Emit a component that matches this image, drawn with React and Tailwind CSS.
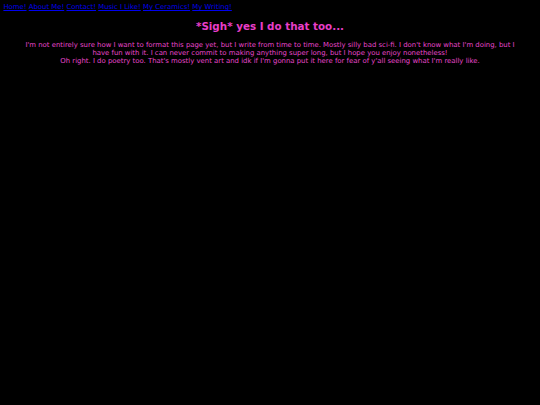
export default function App() {
  const links = ["Home!", "About Me!", "Contact!", "Music I Like!", "My Ceramics!", "My Writing!"];
  return (
    <div className="min-h-[405px] bg-black pt-[3.4px] font-['DejaVu_Sans',sans-serif]">
      <nav className="px-[3.4px] text-[6.9px] leading-[8.1px]">
        {links.map((l) => (
          <span key={l}>
            <a href="#" className="text-[#0000ee] underline">
              {l}
            </a>{" "}
          </span>
        ))}
      </nav>
      <h2 className="mt-[9px] text-center text-[10.35px] font-bold leading-[12.2px] text-[#e83ec8]">
        *Sigh* yes I do that too...
      </h2>
      <p className="mx-[25px] mt-[8.6px] text-center text-[6.9px] leading-[8.1px] text-[#e846cc]">
        I'm not entirely sure how I want to format this page yet, but I write from time to time. Mostly silly bad sci-fi. I don't know what I'm doing, but I have fun with it. I can never commit to making anything super long, but I hope you enjoy nonetheless!
        <br />
        Oh right. I do poetry too. That's mostly vent art and idk if I'm gonna put it here for fear of y'all seeing what I'm really like.
      </p>
    </div>
  );
}
